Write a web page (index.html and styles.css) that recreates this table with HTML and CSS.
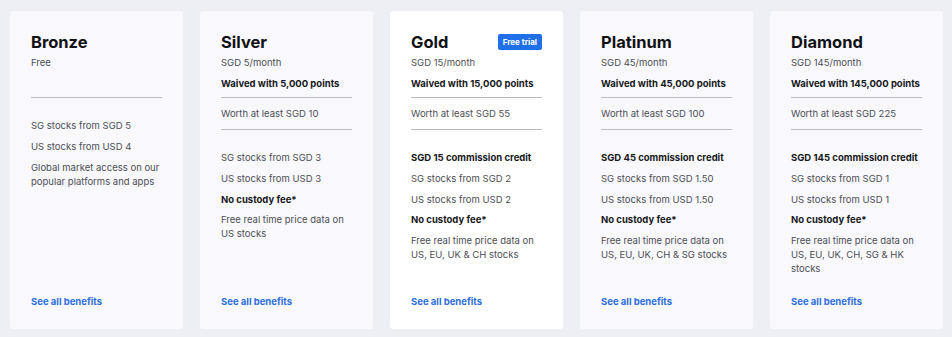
FILE: index.html
```html
<!DOCTYPE html>
<html lang="en">
<head>
    <meta charset="UTF-8">
    <meta name="viewport" content="width=device-width, initial-scale=1.0">
    <title>Membership Tiers</title>
    <link rel="stylesheet" href="styles.css">
</head>
<body>

    <div class="tiers">

        <!-- Bronze -->
        <div class="tier">
            <div class="tier-head">
                <div class="tier-title"><h2>Bronze</h2></div>
                <p class="price">Free</p>
            </div>
            <ul class="benefits">
                <li>SG stocks from SGD 5</li>
                <li>US stocks from USD 4</li>
                <li>Global market access on our popular platforms and apps</li>
            </ul>
            <a href="#" class="more">See all benefits</a>
        </div>

        <!-- Silver -->
        <div class="tier">
            <div class="tier-head">
                <div class="tier-title"><h2>Silver</h2></div>
                <p class="price">SGD 5/month</p>
                <p class="waiver">Waived with 5,000 points</p>
            </div>
            <p class="worth">Worth at least SGD 10</p>
            <ul class="benefits">
                <li>SG stocks from SGD 3</li>
                <li>US stocks from USD 3</li>
                <li class="strong">No custody fee*</li>
                <li>Free real time price data on US stocks</li>
            </ul>
            <a href="#" class="more">See all benefits</a>
        </div>

        <!-- Gold -->
        <div class="tier tier-featured">
            <div class="tier-head">
                <div class="tier-title">
                    <h2>Gold</h2>
                    <span class="badge">Free trial</span>
                </div>
                <p class="price">SGD 15/month</p>
                <p class="waiver">Waived with 15,000 points</p>
            </div>
            <p class="worth">Worth at least SGD 55</p>
            <ul class="benefits">
                <li class="strong">SGD 15 commission credit</li>
                <li>SG stocks from SGD 2</li>
                <li>US stocks from USD 2</li>
                <li class="strong">No custody fee*</li>
                <li>Free real time price data on US, EU, UK &amp; CH stocks</li>
            </ul>
            <a href="#" class="more">See all benefits</a>
        </div>

        <!-- Platinum -->
        <div class="tier">
            <div class="tier-head">
                <div class="tier-title"><h2>Platinum</h2></div>
                <p class="price">SGD 45/month</p>
                <p class="waiver">Waived with 45,000 points</p>
            </div>
            <p class="worth">Worth at least SGD 100</p>
            <ul class="benefits">
                <li class="strong">SGD 45 commission credit</li>
                <li>SG stocks from SGD 1.50</li>
                <li>US stocks from USD 1.50</li>
                <li class="strong">No custody fee*</li>
                <li>Free real time price data on US, EU, UK, CH &amp; SG stocks</li>
            </ul>
            <a href="#" class="more">See all benefits</a>
        </div>

        <!-- Diamond -->
        <div class="tier">
            <div class="tier-head">
                <div class="tier-title"><h2>Diamond</h2></div>
                <p class="price">SGD 145/month</p>
                <p class="waiver">Waived with 145,000 points</p>
            </div>
            <p class="worth">Worth at least SGD 225</p>
            <ul class="benefits">
                <li class="strong">SGD 145 commission credit</li>
                <li>SG stocks from SGD 1</li>
                <li>US stocks from USD 1</li>
                <li class="strong">No custody fee*</li>
                <li>Free real time price data on US, EU, UK, CH, SG &amp; HK stocks</li>
            </ul>
            <a href="#" class="more">See all benefits</a>
        </div>

    </div>

</body>
</html>
```

FILE: styles.css
```css
/* --- Base --- */
body {
    font-family: 'Inter', sans-serif;
    background-color: #eeeff5;
    color: #4d4e54;
    margin: 0;
    padding: 11px 9px 8px 10px;
    box-sizing: border-box;
}

/* --- Tier grid --- */
.tiers {
    display: grid;
    grid-template-columns: repeat(5, 173px);
    gap: 17px;
}

/* --- Tier card --- */
.tier {
    background-color: #f8f8fd;
    border-radius: 3px;
    padding: 20px 21px;
    height: 318px;
    box-sizing: border-box;
    display: flex;
    flex-direction: column;
    font-size: 9.5px;
    line-height: 14px;
}

.tier-featured {
    background-color: #ffffff;
}

.tier p {
    margin: 0;
}

/* --- Header --- */
.tier-head {
    min-height: 66px;
    border-bottom: 1px solid #b9bcc4;
}

.tier-title {
    display: flex;
    align-items: center;
    justify-content: space-between;
    height: 22px;
}

h2 {
    margin: 0;
    font-size: 16.5px;
    font-weight: 700;
    color: #101114;
    line-height: 22px;
}

.badge {
    background-color: #1f6fe8;
    color: white;
    font-size: 8px;
    font-weight: 700;
    line-height: 16px;
    padding: 0 5px;
    border-radius: 2px;
    margin-top: -1px;
}

.tier .price {
    margin-top: 3px;
}

.tier .waiver {
    margin-top: 7px;
    font-weight: 700;
    color: #17181b;
}

.worth {
    padding: 9px 0 8px;
    border-bottom: 1px solid #b9bcc4;
}

/* --- Benefits list --- */
.benefits {
    list-style: none;
    padding: 0;
    margin: 21px 0 0;
}

.benefits li {
    margin-top: 6.75px;
}

.benefits li:first-child {
    margin-top: 0;
}

.benefits .strong {
    font-weight: 700;
    color: #17181b;
}

/* --- Link --- */
.more {
    margin-top: auto;
    color: #2d6fdc;
    font-weight: 700;
    text-decoration: none;
}
```
